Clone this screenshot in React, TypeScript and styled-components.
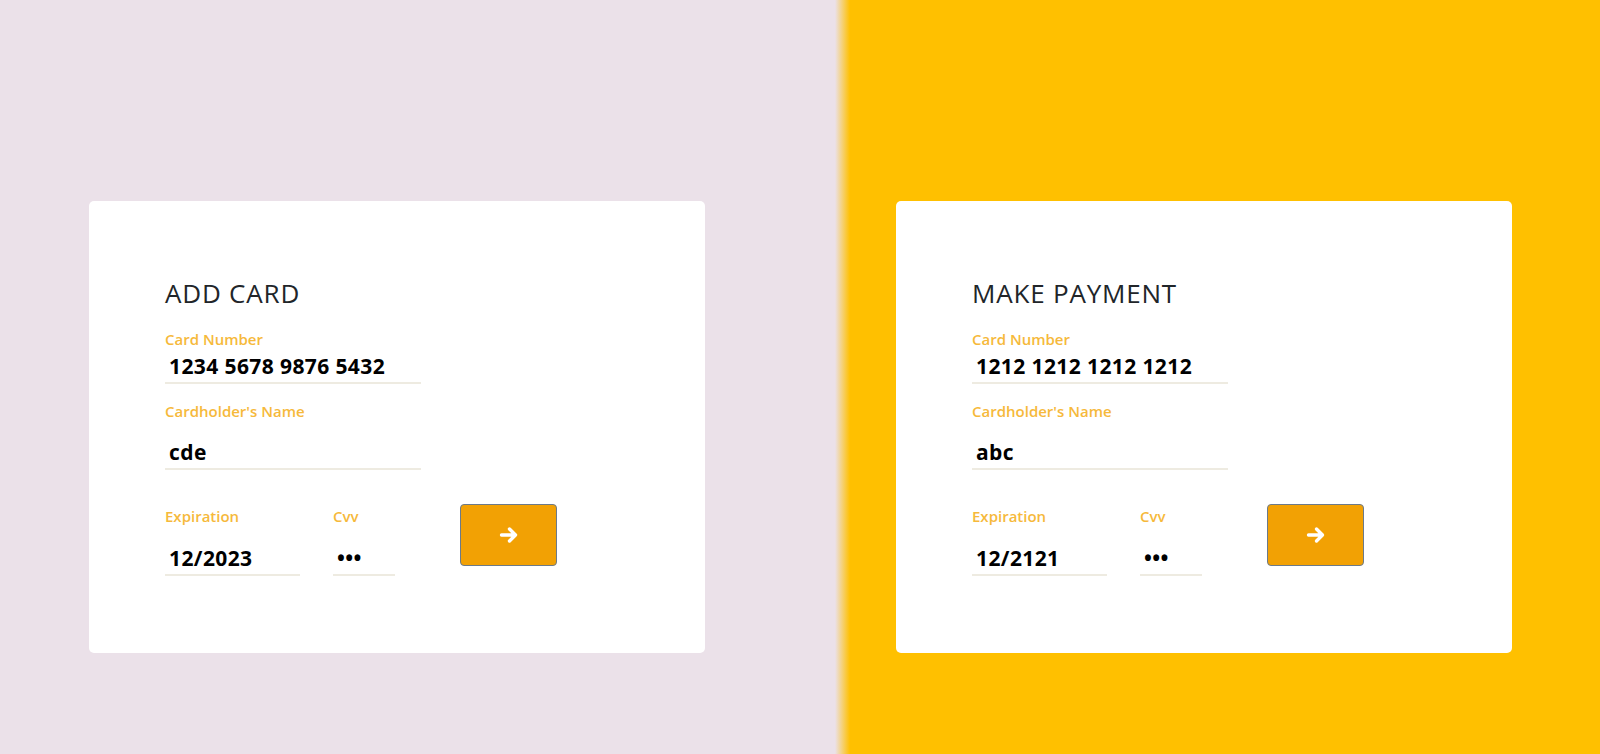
import styled, { createGlobalStyle } from "styled-components";

const GlobalStyle = createGlobalStyle`
  html, body {
    margin: 0;
    padding: 0;
  }
  body {
    font-family: "Open Sans", "Noto Sans", sans-serif;
    background: linear-gradient(to right, #ebe1e9 0, #ebe1e9 835px, #ffc000 850px, #ffc000 100%);
    min-height: 754px;
  }
`;

const Page = styled.div`
  display: flex;
  gap: 191px;
  padding: 201px 0 0 89px;
  height: 754px;
  box-sizing: border-box;
`;

const Card = styled.div`
  width: 616px;
  height: 452px;
  box-sizing: border-box;
  background: #fff;
  border-radius: 5px;
  padding: 77px 0 0 76px;
`;

const Title = styled.h2`
  margin: 0 0 21px;
  font-size: 26px;
  line-height: 30px;
  font-weight: 500;
  letter-spacing: 0.8px;
  color: #212529;
`;

const Field = styled.div<{ $width: number; $gap: number; $top?: number; $left?: number }>`
  display: flex;
  flex-direction: column;
  width: ${(p) => p.$width}px;
  margin-top: ${(p) => p.$top ?? 0}px;
  margin-left: ${(p) => p.$left ?? 0}px;
  gap: ${(p) => p.$gap}px;
`;

const Label = styled.label`
  font-size: 15px;
  line-height: 20px;
  font-weight: 600;
  color: #f6b93b;
`;

const Input = styled.input`
  border: none;
  border-bottom: 2px solid #eeebe1;
  outline: none;
  padding: 0 0 2px 4px;
  margin: 0;
  background: transparent;
  font-family: "Open Sans", "Noto Sans", sans-serif;
  font-weight: 700;
  font-size: 21px;
  letter-spacing: 0.4px;
  line-height: 28px;
  box-sizing: border-box;
  height: 32px;
  color: #000;
  width: 100%;
`;

const Row = styled.div`
  display: flex;
  align-items: flex-start;
  margin-top: 34px;
`;

const Submit = styled.button`
  margin-left: 65px;
  width: 97px;
  height: 62px;
  box-sizing: border-box;
  background: #f2a104;
  border: 1px solid #6c7a89;
  border-radius: 4px;
  display: flex;
  align-items: center;
  justify-content: center;
  padding: 0;
  cursor: pointer;
`;

const Arrow = () => (
  <svg width="20" height="18" viewBox="0 0 20 18" fill="none">
    <path
      d="M2.5 9h14M10.5 3L16.5 9l-6 6"
      stroke="#fff"
      strokeWidth="3.4"
      strokeLinecap="round"
      strokeLinejoin="round"
    />
  </svg>
);

type CardData = {
  title: string;
  number: string;
  name: string;
  expiry: string;
};

const cards: CardData[] = [
  { title: "ADD CARD", number: "1234 5678 9876 5432", name: "cde", expiry: "12/2023" },
  { title: "MAKE PAYMENT", number: "1212 1212 1212 1212", name: "abc", expiry: "12/2121" },
];

function PaymentCard({ data }: { data: CardData }) {
  return (
    <Card>
      <Title>{data.title}</Title>
      <Field $width={256} $gap={3}>
        <Label>Card Number</Label>
        <Input readOnly value={data.number} />
      </Field>
      <Field $width={256} $gap={17} $top={17}>
        <Label>Cardholder's Name</Label>
        <Input readOnly value={data.name} />
      </Field>
      <Row>
        <Field $width={135} $gap={18} $top={2}>
          <Label>Expiration</Label>
          <Input readOnly value={data.expiry} />
        </Field>
        <Field $width={62} $gap={18} $top={2} $left={33}>
          <Label>Cvv</Label>
          <Input readOnly type="password" value="123" />
        </Field>
        <Submit>
          <Arrow />
        </Submit>
      </Row>
    </Card>
  );
}

function App() {
  return (
    <>
      <GlobalStyle />
      <Page>
        {cards.map((c) => (
          <PaymentCard key={c.title} data={c} />
        ))}
      </Page>
    </>
  );
}

export default App;
